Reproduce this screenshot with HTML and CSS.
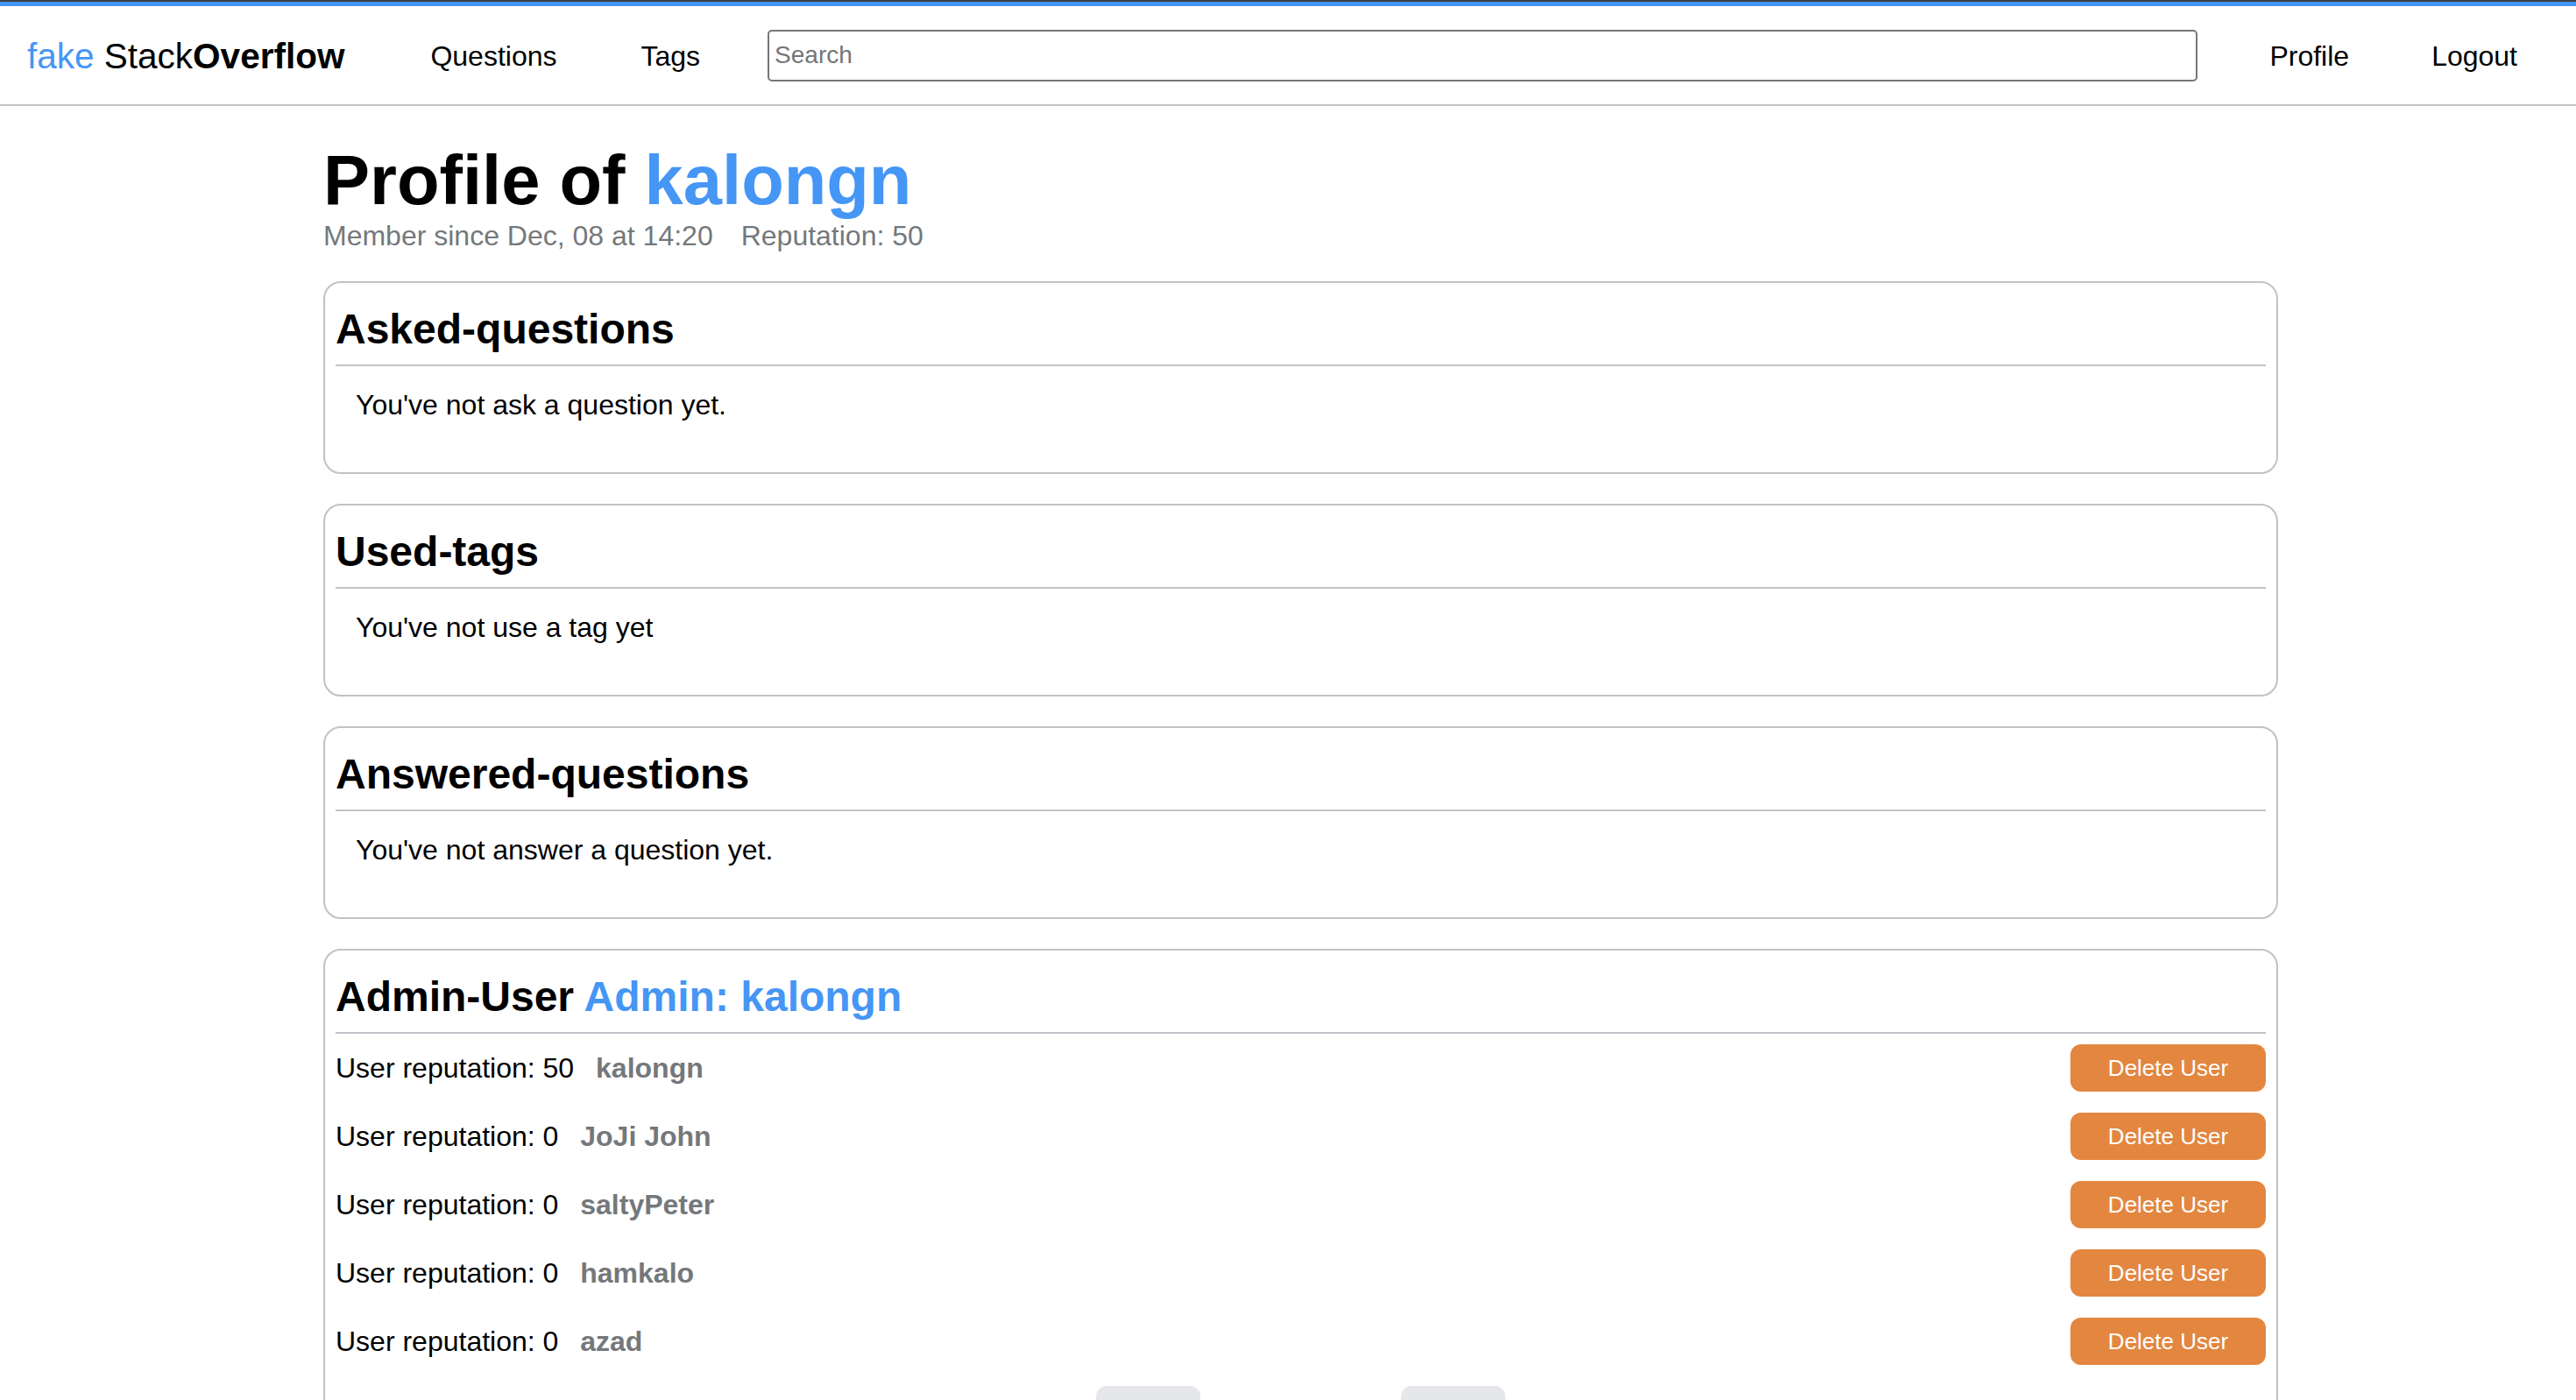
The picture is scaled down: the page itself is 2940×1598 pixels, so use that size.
FILE: index.html
```html
<!DOCTYPE html>
<html lang="en">
<head>
<meta charset="utf-8">
<title>fake StackOverflow - Profile</title>
<link rel="stylesheet" href="styles.css">
</head>
<body>
<div class="topline"></div>
<header class="navbar">
  <a class="logo" href="#"><span class="logo-fake">fake</span> Stack<b>Overflow</b></a>
  <a class="nav-link nav-questions" href="#">Questions</a>
  <a class="nav-link nav-tags" href="#">Tags</a>
  <input class="search" type="text" placeholder="Search">
  <a class="nav-link nav-profile" href="#">Profile</a>
  <a class="nav-link nav-logout" href="#">Logout</a>
</header>
<main class="main">
  <h1 class="title">Profile of <span class="accent">kalongn</span></h1>
  <div class="meta"><span class="meta-since">Member since Dec, 08 at 14:20</span><span>Reputation: 50</span></div>

  <section class="card">
    <h2 class="card-title">Asked-questions</h2>
    <p class="empty">You've not ask a question yet.</p>
  </section>

  <section class="card">
    <h2 class="card-title">Used-tags</h2>
    <p class="empty">You've not use a tag yet</p>
  </section>

  <section class="card">
    <h2 class="card-title">Answered-questions</h2>
    <p class="empty">You've not answer a question yet.</p>
  </section>

  <section class="card card-admin">
    <h2 class="card-title">Admin-User <span class="accent">Admin: kalongn</span></h2>
    <div class="user-list">
      <div class="user-row"><span>User reputation: 50 <b class="user-name">kalongn</b></span><button class="btn-delete">Delete User</button></div>
      <div class="user-row"><span>User reputation: 0 <b class="user-name">JoJi John</b></span><button class="btn-delete">Delete User</button></div>
      <div class="user-row"><span>User reputation: 0 <b class="user-name">saltyPeter</b></span><button class="btn-delete">Delete User</button></div>
      <div class="user-row"><span>User reputation: 0 <b class="user-name">hamkalo</b></span><button class="btn-delete">Delete User</button></div>
      <div class="user-row"><span>User reputation: 0 <b class="user-name">azad</b></span><button class="btn-delete">Delete User</button></div>
    </div>
    <div class="pager">
      <button class="btn-page" aria-label="Previous page"></button>
      <button class="btn-page" aria-label="Next page"></button>
    </div>
  </section>
</main>
</body>
</html>
```
FILE: styles.css
```css
* { box-sizing: border-box; }

html, body {
  margin: 0;
  padding: 0;
  background: #ffffff;
  color: #000000;
  font-family: "Liberation Sans", Arial, Helvetica, sans-serif;
}

.topline {
  height: 7px;
  background: #4596f5;
  border-top: 2px solid #3d3f42;
}

.navbar {
  display: flex;
  align-items: center;
  height: 114px;
  padding: 2px 67px 0 31px;
  border-bottom: 2px solid #c0c3c6;
}

.navbar a {
  color: #000;
  text-decoration: none;
}

.logo {
  font-size: 40.5px;
  white-space: nowrap;
}

.logo-fake { color: #4596f5; }

.nav-link {
  font-size: 32px;
  white-space: nowrap;
}

.nav-questions { margin-left: 98px; }
.nav-tags { margin-left: 96px; }
.nav-logout { margin-left: 94px; }

.search {
  flex: 1;
  height: 59px;
  margin: -2px 82px 0 77px;
  padding: 0 6px;
  border: 2px solid #767676;
  border-radius: 5px;
  font-family: "Liberation Sans", Arial, sans-serif;
  font-size: 28px;
  color: #000;
  outline: none;
}

.search::placeholder { color: #757575; }

.main {
  padding: 0 340px 0 369px;
}

.title {
  margin: 40px 0 0;
  font-size: 79.5px;
  line-height: 90px;
  font-weight: bold;
}

.accent { color: #4596f5; }

.meta {
  font-size: 32px;
  line-height: 36px;
  color: #74787c;
}

.meta-since { margin-right: 32px; }

.card {
  margin-top: 34px;
  padding: 25px 12px 12px;
  border: 2px solid #bfc3c7;
  border-radius: 20px;
}

.card-title {
  margin: 0;
  font-size: 48px;
  line-height: 56px;
  font-weight: bold;
  padding-bottom: 12px;
  border-bottom: 2px solid #bfc3c7;
}

.empty {
  margin: 26px 0 47px 23px;
  font-size: 32px;
  line-height: 36px;
}

.card-admin { padding-bottom: 24px; }

.user-list {
  display: flex;
  flex-direction: column;
  gap: 24px;
  margin-top: 12px;
}

.user-row {
  display: flex;
  align-items: center;
  justify-content: space-between;
  font-size: 32px;
  line-height: 36px;
}

.user-name {
  margin-left: 16px;
  color: #74787c;
}

.btn-delete {
  width: 223px;
  height: 54px;
  border: none;
  border-radius: 12px;
  background: #e3863f;
  color: #ffffff;
  font-family: "Liberation Sans", Arial, sans-serif;
  font-size: 26px;
}

.pager {
  display: flex;
  justify-content: center;
  gap: 229px;
  margin-top: 24px;
}

.btn-page {
  width: 119px;
  height: 54px;
  border: none;
  border-radius: 12px;
  background: #e5e7eb;
}
```
